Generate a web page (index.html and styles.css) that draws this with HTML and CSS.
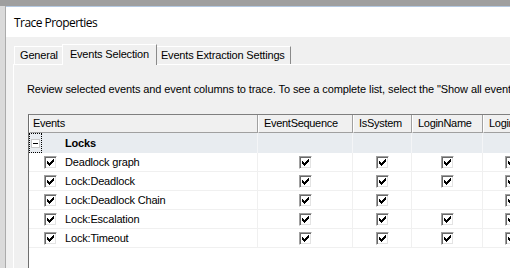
FILE: index.html
```html
<!DOCTYPE html>
<html>
<head>
<meta charset="utf-8">
<link rel="stylesheet" href="styles.css">
</head>
<body>
<div class="topstrip"></div>
<div class="screen">
  <div class="edge"></div>
  <div class="dialog">
    <div class="titlebar">Trace Properties</div>
    <div class="client">
      <div class="tabs">
        <div class="tab">General</div>
        <div class="tab active">Events Selection</div>
        <div class="tab">Events Extraction Settings</div>
      </div>
      <div class="panel">
        <p class="desc">Review selected events and event columns to trace. To see a complete list, select the "Show all events" and "Show all columns" options.</p>
        <div class="grid">
          <div class="row hdr">
            <div class="hc first">Events</div>
            <div class="hc">EventSequence</div>
            <div class="hc">IsSystem</div>
            <div class="hc">LoginName</div>
            <div class="hc">LoginSid</div>
            <div class="hc">NTUserName</div>
          </div>
          <div class="row group">
            <div class="c ev"><span class="focus"><span class="exp"></span></span><b class="gname">Locks</b></div>
            <div class="c"></div><div class="c"></div><div class="c"></div><div class="c"></div><div class="c"></div>
          </div>
          <div class="row data">
            <div class="c ev"><span class="cb"><svg viewBox="0 0 13 13"><path d="M3 5h1v3H3zM4 6h1v3H4zM5 7h1v3H5zM6 6h1v3H6zM7 5h1v3H7zM8 4h1v3H8zM9 3h1v3H9z"/></svg></span>Deadlock graph</div>
            <div class="c"><span class="cb"><svg viewBox="0 0 13 13"><path d="M3 5h1v3H3zM4 6h1v3H4zM5 7h1v3H5zM6 6h1v3H6zM7 5h1v3H7zM8 4h1v3H8zM9 3h1v3H9z"/></svg></span></div>
            <div class="c"><span class="cb"><svg viewBox="0 0 13 13"><path d="M3 5h1v3H3zM4 6h1v3H4zM5 7h1v3H5zM6 6h1v3H6zM7 5h1v3H7zM8 4h1v3H8zM9 3h1v3H9z"/></svg></span></div>
            <div class="c"><span class="cb"><svg viewBox="0 0 13 13"><path d="M3 5h1v3H3zM4 6h1v3H4zM5 7h1v3H5zM6 6h1v3H6zM7 5h1v3H7zM8 4h1v3H8zM9 3h1v3H9z"/></svg></span></div>
            <div class="c"><span class="cb"><svg viewBox="0 0 13 13"><path d="M3 5h1v3H3zM4 6h1v3H4zM5 7h1v3H5zM6 6h1v3H6zM7 5h1v3H7zM8 4h1v3H8zM9 3h1v3H9z"/></svg></span></div>
            <div class="c"></div>
          </div>
          <div class="row data">
            <div class="c ev"><span class="cb"><svg viewBox="0 0 13 13"><path d="M3 5h1v3H3zM4 6h1v3H4zM5 7h1v3H5zM6 6h1v3H6zM7 5h1v3H7zM8 4h1v3H8zM9 3h1v3H9z"/></svg></span>Lock:Deadlock</div>
            <div class="c"><span class="cb"><svg viewBox="0 0 13 13"><path d="M3 5h1v3H3zM4 6h1v3H4zM5 7h1v3H5zM6 6h1v3H6zM7 5h1v3H7zM8 4h1v3H8zM9 3h1v3H9z"/></svg></span></div>
            <div class="c"><span class="cb"><svg viewBox="0 0 13 13"><path d="M3 5h1v3H3zM4 6h1v3H4zM5 7h1v3H5zM6 6h1v3H6zM7 5h1v3H7zM8 4h1v3H8zM9 3h1v3H9z"/></svg></span></div>
            <div class="c"><span class="cb"><svg viewBox="0 0 13 13"><path d="M3 5h1v3H3zM4 6h1v3H4zM5 7h1v3H5zM6 6h1v3H6zM7 5h1v3H7zM8 4h1v3H8zM9 3h1v3H9z"/></svg></span></div>
            <div class="c"><span class="cb"><svg viewBox="0 0 13 13"><path d="M3 5h1v3H3zM4 6h1v3H4zM5 7h1v3H5zM6 6h1v3H6zM7 5h1v3H7zM8 4h1v3H8zM9 3h1v3H9z"/></svg></span></div>
            <div class="c"></div>
          </div>
          <div class="row data">
            <div class="c ev"><span class="cb"><svg viewBox="0 0 13 13"><path d="M3 5h1v3H3zM4 6h1v3H4zM5 7h1v3H5zM6 6h1v3H6zM7 5h1v3H7zM8 4h1v3H8zM9 3h1v3H9z"/></svg></span>Lock:Deadlock Chain</div>
            <div class="c"><span class="cb"><svg viewBox="0 0 13 13"><path d="M3 5h1v3H3zM4 6h1v3H4zM5 7h1v3H5zM6 6h1v3H6zM7 5h1v3H7zM8 4h1v3H8zM9 3h1v3H9z"/></svg></span></div>
            <div class="c"><span class="cb"><svg viewBox="0 0 13 13"><path d="M3 5h1v3H3zM4 6h1v3H4zM5 7h1v3H5zM6 6h1v3H6zM7 5h1v3H7zM8 4h1v3H8zM9 3h1v3H9z"/></svg></span></div>
            <div class="c"></div>
            <div class="c"><span class="cb"><svg viewBox="0 0 13 13"><path d="M3 5h1v3H3zM4 6h1v3H4zM5 7h1v3H5zM6 6h1v3H6zM7 5h1v3H7zM8 4h1v3H8zM9 3h1v3H9z"/></svg></span></div>
            <div class="c"></div>
          </div>
          <div class="row data">
            <div class="c ev"><span class="cb"><svg viewBox="0 0 13 13"><path d="M3 5h1v3H3zM4 6h1v3H4zM5 7h1v3H5zM6 6h1v3H6zM7 5h1v3H7zM8 4h1v3H8zM9 3h1v3H9z"/></svg></span>Lock:Escalation</div>
            <div class="c"><span class="cb"><svg viewBox="0 0 13 13"><path d="M3 5h1v3H3zM4 6h1v3H4zM5 7h1v3H5zM6 6h1v3H6zM7 5h1v3H7zM8 4h1v3H8zM9 3h1v3H9z"/></svg></span></div>
            <div class="c"><span class="cb"><svg viewBox="0 0 13 13"><path d="M3 5h1v3H3zM4 6h1v3H4zM5 7h1v3H5zM6 6h1v3H6zM7 5h1v3H7zM8 4h1v3H8zM9 3h1v3H9z"/></svg></span></div>
            <div class="c"><span class="cb"><svg viewBox="0 0 13 13"><path d="M3 5h1v3H3zM4 6h1v3H4zM5 7h1v3H5zM6 6h1v3H6zM7 5h1v3H7zM8 4h1v3H8zM9 3h1v3H9z"/></svg></span></div>
            <div class="c"><span class="cb"><svg viewBox="0 0 13 13"><path d="M3 5h1v3H3zM4 6h1v3H4zM5 7h1v3H5zM6 6h1v3H6zM7 5h1v3H7zM8 4h1v3H8zM9 3h1v3H9z"/></svg></span></div>
            <div class="c"></div>
          </div>
          <div class="row data">
            <div class="c ev"><span class="cb"><svg viewBox="0 0 13 13"><path d="M3 5h1v3H3zM4 6h1v3H4zM5 7h1v3H5zM6 6h1v3H6zM7 5h1v3H7zM8 4h1v3H8zM9 3h1v3H9z"/></svg></span>Lock:Timeout</div>
            <div class="c"><span class="cb"><svg viewBox="0 0 13 13"><path d="M3 5h1v3H3zM4 6h1v3H4zM5 7h1v3H5zM6 6h1v3H6zM7 5h1v3H7zM8 4h1v3H8zM9 3h1v3H9z"/></svg></span></div>
            <div class="c"><span class="cb"><svg viewBox="0 0 13 13"><path d="M3 5h1v3H3zM4 6h1v3H4zM5 7h1v3H5zM6 6h1v3H6zM7 5h1v3H7zM8 4h1v3H8zM9 3h1v3H9z"/></svg></span></div>
            <div class="c"><span class="cb"><svg viewBox="0 0 13 13"><path d="M3 5h1v3H3zM4 6h1v3H4zM5 7h1v3H5zM6 6h1v3H6zM7 5h1v3H7zM8 4h1v3H8zM9 3h1v3H9z"/></svg></span></div>
            <div class="c"><span class="cb"><svg viewBox="0 0 13 13"><path d="M3 5h1v3H3zM4 6h1v3H4zM5 7h1v3H5zM6 6h1v3H6zM7 5h1v3H7zM8 4h1v3H8zM9 3h1v3H9z"/></svg></span></div>
            <div class="c"></div>
          </div>
        </div>
      </div>
    </div>
  </div>
</div>
</body>
</html>
```
FILE: styles.css
```css
* { box-sizing: border-box; }
html, body { margin: 0; height: 268px; overflow: hidden; }
body {
  background: #a0a0a0;
  font-family: "Liberation Sans", Arial, sans-serif;
  font-size: 11px;
  letter-spacing: -0.18px;
  color: #000;
  display: flex;
  flex-direction: column;
}
.topstrip { height: 6px; background: #9f9f9f; flex: none; }
.screen { flex: 1; display: flex; min-height: 0; }
.edge { width: 6px; flex: none; background: #dadada; border-right: 1px solid #ababab; }
.dialog { flex: 1; display: flex; flex-direction: column; min-width: 0; border-top: 1px solid #b4c8e0; }
.titlebar {
  height: 30px; flex: none; background: #fff;
  display: flex; align-items: center; padding-left: 8px;
  font-family: "Open Sans", sans-serif; font-size: 12px; letter-spacing: -0.55px;
}
.client { flex: 1; background: #f0f0f0; padding: 7px 0 0 7px; display: flex; flex-direction: column; min-height: 0; min-width: 0; }
.tabs { display: flex; align-items: flex-end; height: 20px; padding-left: 1px; flex: none; }
.tab {
  height: 18px; padding: 0 5px; line-height: 17px; white-space: nowrap;
  letter-spacing: -0.18px;
  background: #f0f0f0;
  border: 1px solid; border-bottom: none;
  border-color: #fff #8a8a8a #fff #fff;
}
.tab.active { height: 21px; margin: 0 -2px -1px; padding: 0 7px; line-height: 19px; position: relative; z-index: 1; }
.panel {
  flex: 1; min-height: 0; display: flex; flex-direction: column;
  border-top: 1px solid #fff; border-left: 1px solid #fff;
  padding-left: 13px; overflow: hidden;
}
.desc { margin: 18px 0 0; line-height: 13px; white-space: nowrap; letter-spacing: -0.1px; }
.grid {
  margin: 18px 0 0 1px; flex: 1;
  border-top: 1px solid #7f7f7f; border-left: 1px solid #6e6e6e;
  background: #fff; width: max-content;
}
.row { display: grid; grid-template-columns: 229px 95px 59px 71px 57px 80px; }
.hc {
  height: 18px; line-height: 17px; padding-left: 5px; white-space: nowrap;
  letter-spacing: -0.3px;
  background: #f0f0f0;
  border-left: 1px solid #fff; border-right: 1px solid #a0a0a0; border-bottom: 1px solid #a0a0a0;
}
.hc.first { padding-left: 3px; }
.c { display: flex; align-items: center; justify-content: center; border-right: 1px solid #f0f0f0; border-bottom: 1px solid #f0f0f0; }
.group .c { height: 20px; background: #e8ecf0; border-bottom: none; border-right-color: #f4f5f7; }
.data .c { height: 19px; }
.c.ev { justify-content: flex-start; padding-left: 15px; gap: 8px; white-space: nowrap; }
.group .c.ev { padding-left: 0; gap: 0; }
.focus {
  width: 13px; height: 20px; border: 1px dotted #000;
  display: flex; align-items: center; justify-content: center; flex: none;
}
.exp { width: 9px; height: 9px; border: 1px solid #c8c8c8; background: #fff; display: flex; align-items: center; justify-content: center; }
.exp::after { content: ""; width: 5px; height: 1px; background: #000; }
.gname { margin-left: 23px; font-weight: bold; }
.cb {
  width: 13px; height: 13px; flex: none; display: block;
  border: 1px solid; border-color: #a0a0a0 #fff #fff #a0a0a0;
  box-shadow: inset 1px 1px #696969, inset -1px -1px #e3e3e3;
  background: #fff;
  position: relative;
}
.cb svg { position: absolute; left: -1px; top: -1px; width: 13px; height: 13px; fill: #000; }
```
